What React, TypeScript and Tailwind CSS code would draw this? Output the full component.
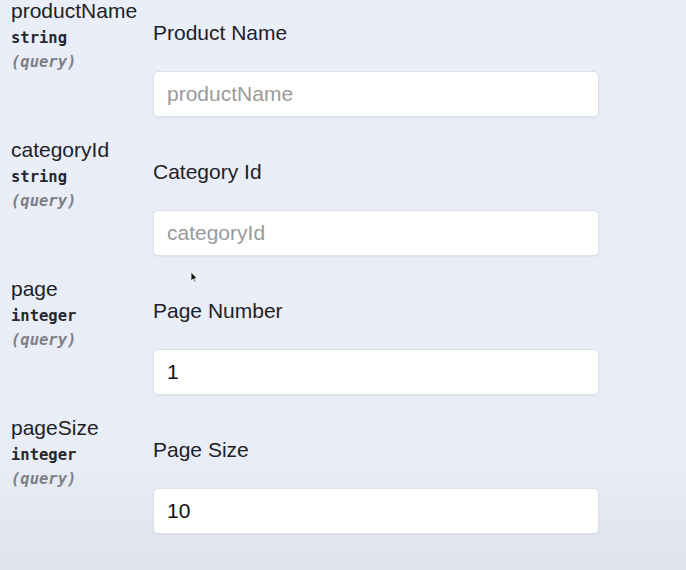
import { useState } from 'react'

type Param = {
  name: string
  type: string
  label: string
  placeholder: string
  value: string
}

const params: Param[] = [
  { name: 'productName', type: 'string', label: 'Product Name', placeholder: 'productName', value: '' },
  { name: 'categoryId', type: 'string', label: 'Category Id', placeholder: 'categoryId', value: '' },
  { name: 'page', type: 'integer', label: 'Page Number', placeholder: 'page', value: '1' },
  { name: 'pageSize', type: 'integer', label: 'Page Size', placeholder: 'pageSize', value: '10' },
]

function ParamRow({ p }: { p: Param }) {
  const [value, setValue] = useState(p.value)
  return (
    <div className="flex h-[139px]">
      {/* left: name / type / location */}
      <div className="w-[153px] shrink-0 pl-[11px]">
        <div className="text-[21px] leading-[22px] text-[#1f2126] font-['Liberation_Sans',sans-serif]">{p.name}</div>
        <div className="mt-[5px] text-[15.5px] leading-[22px] font-bold text-[#25282f] font-['DejaVu_Sans_Mono',monospace]">{p.type}</div>
        <div className="mt-[2px] text-[15.5px] leading-[22px] font-bold italic text-[#7e8085] font-['DejaVu_Sans_Mono',monospace]">(query)</div>
      </div>

      {/* right: description + input */}
      <div className="w-[446px] pt-[21px] font-['Liberation_Sans',sans-serif]">
        <div className="text-[21px] leading-[24px] text-[#1f2126]">{p.label}</div>
        <input
          type="text"
          placeholder={p.placeholder}
          value={value}
          onChange={e => setValue(e.target.value)}
          className="mt-[26px] block h-[46px] w-full rounded-[5px] border border-[#dcdfe6] bg-white px-[13px] text-[21px] text-[#111] placeholder:text-[#9a9a9a] shadow-[0_1px_2px_rgba(0,0,0,0.06)] focus:outline-none"
        />
      </div>
    </div>
  )
}

export default function App() {
  return (
    <div className="relative h-[570px] w-[686px] overflow-hidden bg-linear-to-b from-[#eaeef8] via-[#e9edf6] via-80% to-[#dfe3ec]">
      {params.map(p => <ParamRow key={p.name} p={p} />)}

      {/* mouse pointer */}
      <svg className="absolute left-[190px] top-[271px]" width="8" height="12" viewBox="0 0 8 12">
        <path d="M1 1 L1 10 L3.2 8 L4.8 11.2 L6 10.6 L4.5 7.6 L7.2 7.4 Z" fill="#111" stroke="#fff" strokeWidth="0.8" />
      </svg>
    </div>
  )
}
